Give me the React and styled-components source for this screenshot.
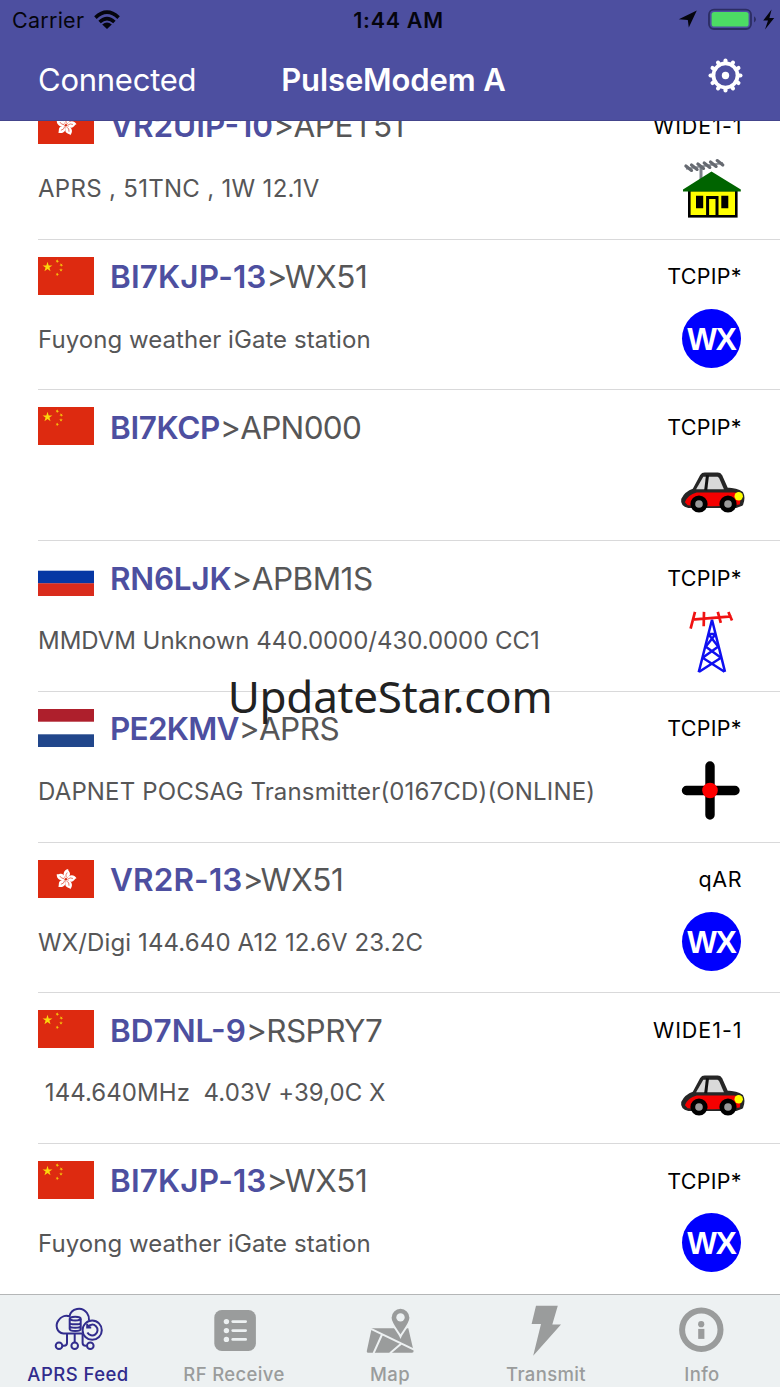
import React from 'react'
import styled, { createGlobalStyle } from 'styled-components'

const GlobalStyle = createGlobalStyle`
  * { box-sizing: border-box; }
  body {
    margin: 0;
    background: #fff;
    font-family: Inter, "Liberation Sans", sans-serif;
  }
`

const Screen = styled.div`
  position: relative;
  display: flex;
  flex-direction: column;
  width: 780px;
  height: 1387px;
  overflow: hidden;
  background: #fff;
`

// header
const Header = styled.header`
  height: 121px;
  flex: none;
  background: #4d4fa0;
  border-bottom: 1px solid #44458c;
`
const StatusBar = styled.div`
  height: 40px;
  padding: 0 3px 0 12px;
  display: grid;
  grid-template-columns: 1fr auto 1fr;
  align-items: center;
  font-size: 21.5px;
  line-height: 40px;
  color: #05050d;
`
const StatusSide = styled.div`
  display: flex;
  align-items: center;
  justify-content: ${(p) => (p.$end ? 'flex-end' : 'flex-start')};
  gap: 9px;
`
const Carrier = styled.span`
  letter-spacing: 0.25px;
`
const Clock = styled.span`
  font-weight: 600;
  letter-spacing: 0.7px;
  margin-left: 8px;
`
const StatusIcons = styled.svg`
  display: block;
  width: 99px;
  height: 24px;
`
const NavBar = styled.div`
  height: 80px;
  padding: 0 37px 0 38px;
  display: grid;
  grid-template-columns: 1fr auto 1fr;
  align-items: center;
  color: #fff;
  font-size: 31px;
  line-height: 78px;
`
const NavLink = styled.span`
  letter-spacing: -0.25px;
`
const NavTitle = styled.span`
  font-weight: 600;
  letter-spacing: -0.1px;
  margin-left: 6px;
`
const GearIcon = styled.svg`
  display: block;
  width: 35px;
  height: 35px;
  justify-self: end;
  margin-top: -9px;
`

// packets
const List = styled.main`
  flex: 1;
  min-height: 0;
  overflow: hidden;
`
const Rows = styled.div`
  margin-top: -32.1px;
  padding-left: 38px;
`
const Row = styled.div`
  height: 150.72px;
  padding-right: 36px;
  border-bottom: 1px solid #d9d9da;
  display: flex;
  justify-content: space-between;
`
const RowMain = styled.div`
  display: flex;
  flex-direction: column;
`
const RowHead = styled.div`
  height: 38px;
  margin-top: 17px;
  display: flex;
  align-items: center;
  gap: 16px;
`
const FlagBox = styled.svg`
  display: block;
  width: 56px;
  height: 38px;
`
const Route = styled.div`
  padding-top: 3px;
  font-size: 31.5px;
  line-height: 40px;
  letter-spacing: ${(p) => p.$track || 0}px;
  white-space: nowrap;
  color: #565657;
`
const Call = styled.span`
  font-weight: 600;
  color: #4d4fa0;
  letter-spacing: ${(p) => p.$track || 0}px;
`
const Comment = styled.div`
  margin-top: 29px;
  font-size: 24px;
  line-height: 32px;
  letter-spacing: ${(p) => p.$track || 0}px;
  white-space: pre;
  color: #565657;
`
const RowSide = styled.div`
  display: flex;
  flex-direction: column;
  align-items: flex-end;
`
const Path = styled.div`
  margin: 22.6px ${(p) => 2.5 - p.$track}px 0 0;
  height: 28px;
  font-size: 21.5px;
  line-height: 28px;
  letter-spacing: ${(p) => p.$track || 0}px;
  color: #000;
`
const SymbolBox = styled.div`
  width: 66px;
  height: 66px;
  margin-top: 15px;
  display: flex;
  align-items: center;
  justify-content: center;
`
const Drawing = styled.svg`
  display: block;
  width: 66px;
  height: 66px;
  overflow: visible;
`
const WxBadge = styled.div`
  width: 59px;
  height: 59px;
  border-radius: 50%;
  background: #0000fe;
  color: #fff;
  font: bold 31.5px/60px "Liberation Sans", Arial, sans-serif;
  letter-spacing: -1px;
  padding-left: 1px;
  text-align: center;
`

const Watermark = styled.div`
  position: absolute;
  top: 666px;
  left: 0;
  width: 780px;
  text-align: center;
  font: 44px/60px "Noto Sans", "Open Sans", sans-serif;
  letter-spacing: -0.25px;
  color: #222;
`

// tabs
const TabBar = styled.nav`
  flex: none;
  height: 93px;
  display: flex;
  background: #edf1f2;
  border-top: 1px solid #b4b6b7;
`
const Tab = styled.div`
  flex: 1;
  padding-top: 9px;
  display: flex;
  flex-direction: column;
  align-items: center;
  color: ${(p) => (p.$active ? '#312c8d' : '#9a9c9c')};
`
const TabIcon = styled.svg`
  display: block;
  width: 52px;
  height: 52px;
`
const TabLabel = styled.span`
  margin-top: 6px;
  font-size: 18.5px;
  font-weight: 500;
  line-height: 24px;
  letter-spacing: ${(p) => p.$track || 0}px;
`

const STAR = 'M0-1L.2245-.309.951-.309.363.118.588.809 0 .382-.588.809-.363.118-.951-.309-.2245-.309Z'

const flags = {
  cn: (
    <>
      <rect width="56" height="38" fill="#dd2a10" />
      <path d={STAR} fill="#fbd80c" transform="translate(9.5 10) scale(5.2)" />
      <path d={STAR} fill="#f5c40c" transform="translate(19.3 4.2) rotate(20) scale(2)" />
      <path d={STAR} fill="#f5c40c" transform="translate(23.2 8) rotate(40) scale(2)" />
      <path d={STAR} fill="#f5c40c" transform="translate(23 13) scale(2)" />
      <path d={STAR} fill="#f5c40c" transform="translate(19.3 17.4) rotate(20) scale(2)" />
    </>
  ),
  hk: (
    <>
      <rect width="56" height="38" fill="#dd2a10" />
      <g transform="translate(28 19.4)">
        {[8, 80, 152, 224, 296].map((a) => (
          <g key={a} transform={`rotate(${a})`}>
            <path d="M0-.8C-4.2-3-4.4-8.8.8-10.6C.2-9 3.8-7.8 3.2-4.8C2.8-2.6.8-2.4 0-.8Z" fill="#fff" />
            <path d="M0-2Q-1.6-4.4.3-7" fill="none" stroke="#dd2a10" strokeWidth=".6" />
          </g>
        ))}
      </g>
    </>
  ),
  ru: (
    <>
      <rect width="56" height="13" fill="#fff" />
      <rect y="12.7" width="56" height="12.8" fill="#0637a4" />
      <rect y="25.3" width="56" height="12.7" fill="#d92b1c" />
    </>
  ),
  nl: (
    <>
      <rect width="56" height="38" fill="#fff" />
      <rect width="56" height="12.7" fill="#ae1f2c" />
      <rect y="25.3" width="56" height="12.7" fill="#21468b" />
    </>
  ),
}

const House = () => (
  <Drawing viewBox="-1 0 66 66">
    <path d="M22 11V25" stroke="#7b8088" strokeWidth="3" />
    <path d="M7 13.8L44 8" stroke="#8d9299" strokeWidth="1.8" />
    {[[9.7, 13.2], [15.3, 12.2], [21.7, 11.2], [28, 10.2], [34.3, 9.2], [41, 7.8]].map(([x, y]) => (
      <path key={x} d={`M${x - 2.8} ${y - 2.2}l5.6 4.4`} stroke="#666a71" strokeWidth="3.2" strokeLinecap="round" />
    ))}
    <rect x="10.3" y="35" width="47" height="26.3" fill="#ff0" stroke="#000" strokeWidth="2.6" />
    <path d="M32.5 16.5L61.8 34.6V36.4H4V34.6Z" fill="#006400" />
    <path d="M17 40.8h7.2v12.4H17zM42.3 40.8h7v12.4h-7z" fill="#000" />
    <path d="M28.6 60V42.4H38V61" fill="none" stroke="#000" strokeWidth="3" />
  </Drawing>
)

const Car = () => (
  <Drawing viewBox="-0.7 -0.3 66 66">
    <path
      d="M4 43Q7 36.5 15.2 33.6L22.8 19.4Q23.8 17.8 26 17.8H39Q41 17.8 42 19.4L48 32.8Q58 33.2 63 36.6Q65.5 41 63 48L57 50.3H10Q3 48.5 4 43Z"
      fill="#262626" stroke="#262626" strokeWidth="3" strokeLinejoin="round"
    />
    <path d="M6.2 46Q9 38.4 18 36.2H55Q61 36.5 62.5 40L61 48.3Q40 51 9 49Z" fill="#f50000" />
    <path d="M17.4 33L24.6 20.4H38.8Q40 20.8 40.6 22.2L45.2 33Z" fill="#d9d9d9" />
    <path d="M28.8 19L27 34" stroke="#111" strokeWidth="3" />
    {[20.3, 49.3].map((x) => (
      <g key={x}>
        <circle cx={x} cy="47.7" r="8.6" fill="#000" />
        <circle cx={x} cy="47.7" r="3.8" fill="#999" />
      </g>
    ))}
    <circle cx="60" cy="40" r="4.2" fill="#ff0" />
  </Drawing>
)

const Tower = () => (
  <Drawing viewBox="-1 0.3 66 66" fill="none">
    <g stroke="#0f0ff0" strokeWidth="2.5">
      <path d="M19.7 65.5L33 13L46 65.2" />
      <path d="M29.3 27.3H36.7M29.3 27.3L39 39.5M36.7 27.3L27 39.5M26.5 39.7L42 51M39.4 39.7L23.6 51M23.6 51L45.5 65M42 51L20.2 65" />
    </g>
    <path
      d="M13 13L52.5 9.7M16 5.2L11.6 22M25 5.2L24.7 19.5M38.8 5.2L41.8 16.2M49.4 5.2L53 13.8"
      stroke="#f01212" strokeWidth="2.7"
    />
  </Drawing>
)

const Digi = () => (
  <Drawing viewBox="-2 -0.5 66 66">
    <path d="M30 8.5V57.5M6.5 33H55" stroke="#000" strokeWidth="9.4" strokeLinecap="round" />
    <circle cx="30" cy="33" r="7.8" fill="#f00" />
  </Drawing>
)

const symbols = {
  house: <House />,
  car: <Car />,
  tower: <Tower />,
  digi: <Digi />,
  wx: <WxBadge>WX</WxBadge>,
}

// letter spacing of the path labels
const pathTrack = { 'WIDE1-1': 0.95, 'TCPIP*': 0.25, qAR: 0.6 }

// track: letter spacing of [call, destination, comment]
const packets = [
  { flag: 'hk', call: 'VR2UIP-10', to: 'APET51', path: 'WIDE1-1', symbol: 'house', text: 'APRS , 51TNC , 1W 12.1V', track: [0, -0.45, 0.3] },
  { flag: 'cn', call: 'BI7KJP-13', to: 'WX51', path: 'TCPIP*', symbol: 'wx', text: 'Fuyong weather iGate station', track: [0.12, -0.45, 0.05] },
  { flag: 'cn', call: 'BI7KCP', to: 'APN000', path: 'TCPIP*', symbol: 'car', text: '', track: [-0.35, -0.7, 0] },
  { flag: 'ru', call: 'RN6LJK', to: 'APBM1S', path: 'TCPIP*', symbol: 'tower', text: 'MMDVM Unknown 440.0000/430.0000 CC1', track: [-0.25, -0.5, -0.04] },
  { flag: 'nl', call: 'PE2KMV', to: 'APRS', path: 'TCPIP*', symbol: 'digi', text: 'DAPNET POCSAG Transmitter(0167CD)(ONLINE)', track: [-0.75, -0.55, 0.16] },
  { flag: 'hk', call: 'VR2R-13', to: 'WX51', path: 'qAR', symbol: 'wx', text: 'WX/Digi 144.640 A12 12.6V 23.2C', track: [0.12, -0.45, 0.12] },
  { flag: 'cn', call: 'BD7NL-9', to: 'RSPRY7', path: 'WIDE1-1', symbol: 'car', text: ' 144.640MHz  4.03V +39,0C X', track: [0, -0.55, 0.06] },
  { flag: 'cn', call: 'BI7KJP-13', to: 'WX51', path: 'TCPIP*', symbol: 'wx', text: 'Fuyong weather iGate station', track: [0.12, -0.45, 0.05] },
]

const tabs = [
  {
    label: 'APRS Feed',
    active: true,
    icon: (
      <g fill="none" stroke="currentColor" strokeWidth="2">
        <path d="M30 29.4H11.5C4.5 28.6 3 21 6.5 16.4C9 12.6 13.5 11 17.5 12.3C19 4 30 2 35 9C37 11.8 37.3 14 37 16.4" />
        <path d="M17.7 15V25C17.7 27.6 28.7 27.6 28.7 25V15M17.7 18.4C17.7 21 28.7 21 28.7 18.4M17.7 21.8C17.7 24.4 28.7 24.4 28.7 21.8" />
        <ellipse cx="23.2" cy="14.6" rx="5.5" ry="1.9" />
        <circle cx="40.2" cy="26.2" r="9.6" />
        <path d="M35.8 22.8A5.4 5.4 0 1 1 35.4 28.6M35.2 19.8V23.6H39.2" />
        <path d="M15 29.6V39Q15 41.7 12 41.7H10.7M22.7 29.6V38M30.6 29.6V39Q30.6 41.7 33.6 41.7H34.7" />
        <circle cx="7" cy="41.7" r="3.3" />
        <circle cx="22.7" cy="41.7" r="3.3" />
        <circle cx="38.3" cy="41.7" r="3.3" />
      </g>
    ),
  },
  {
    label: 'RF Receive',
    icon: (
      <>
        <rect x="6.3" y="6" width="41.6" height="41" rx="7.5" fill="currentColor" />
        {[17.6, 26.6, 35.4].map((y) => (
          <g key={y} fill="#edf1f2">
            <circle cx="18.4" cy={y} r="2.7" />
            <rect x="23.4" y={y - 1.3} width="15.6" height="2.6" rx="1.3" />
          </g>
        ))}
      </>
    ),
  },
  {
    label: 'Map',
    icon: (
      <>
        <path d="M7.7 24.3H44.3L49.6 47Q49.8 48.8 48 48.8H4Q2.4 48.8 2.8 47Z" fill="currentColor" />
        <path d="M7 24.8L50 45.6M18 30.5L9.6 49.2M26 49.2L37.4 39.4" stroke="#edf1f2" strokeWidth="2" />
        <path
          d="M36.5 32.5C34.5 28 26.6 19.6 26.6 13.7A9.9 9.9 0 0 1 46.4 13.7C46.4 19.6 38.5 28 36.5 32.5Z"
          fill="currentColor" stroke="#edf1f2" strokeWidth="2"
        />
        <circle cx="36.5" cy="13.4" r="4.2" fill="#edf1f2" />
      </>
    ),
  },
  {
    label: 'Transmit',
    icon: <path d="M16 1.7H37.8L32.3 20.5H41L13.2 51.8L21 20H11.6Z" fill="currentColor" />,
  },
  {
    label: 'Info',
    icon: (
      <g fill="currentColor">
        <circle cx="25.3" cy="25.8" r="19.2" fill="none" stroke="currentColor" strokeWidth="6" />
        <circle cx="25.2" cy="20.2" r="3.1" />
        <path d="M22.2 24.9h6.2v10h-6.2z" />
      </g>
    ),
  },
]

const Wifi = () => (
  <svg width="28" height="20" viewBox="0 0 28 20" fill="none" stroke="#05050d" strokeWidth="3.6">
    <path d="M2.4 7.6Q14-3.2 25.6 7.6M6.6 12Q14 5.2 21.4 12" />
    <path d="M14 19L9.2 14.6Q14 10.6 18.8 14.6Z" fill="#05050d" stroke="none" />
  </svg>
)

const Gear = () => (
  <GearIcon viewBox="-18 -18 36 36" fill="none" stroke="#fff">
    <circle r="12.4" strokeWidth="3.9" />
    {Array.from({ length: 12 }, (_, i) => (
      <path key={i} d="M0-13V-15.4" strokeWidth="4.2" strokeLinecap="round" transform={`rotate(${i * 30})`} />
    ))}
    <circle r="3.8" fill="#fff" stroke="none" />
  </GearIcon>
)

export default function App() {
  return (
    <>
      <GlobalStyle />
      <Screen>
        <Header>
          <StatusBar>
            <StatusSide>
              <Carrier>Carrier</Carrier>
              <Wifi />
            </StatusSide>
            <Clock>1:44 AM</Clock>
            <StatusSide $end>
              <StatusIcons viewBox="0 0 99 24">
                <path d="M18.8 2.4L10.8 19.6L9.8 12L.8 11.2Z" fill="#05050d" />
                <rect x="31" y="1.6" width="42" height="19.4" rx="5" fill="none" stroke="#2c2d63" strokeWidth="1.8" />
                <rect x="33.6" y="4" width="37" height="14.6" rx="2.6" fill="#4cdc64" />
                <path d="M76 8.2Q80 11.3 76 14.6Z" fill="#2c2d63" />
                <path d="M93.6 1.6L85.2 12.6H90L87 21.6L96.2 10H91.4Z" fill="#05050d" />
              </StatusIcons>
            </StatusSide>
          </StatusBar>
          <NavBar>
            <NavLink>Connected</NavLink>
            <NavTitle>PulseModem A</NavTitle>
            <Gear />
          </NavBar>
        </Header>

        <List>
          <Rows>
            {packets.map((item, i) => (
              <Row key={i}>
                <RowMain>
                  <RowHead>
                    <FlagBox viewBox="0 0 56 38">{flags[item.flag]}</FlagBox>
                    <Route $track={item.track[1]}>
                      <Call $track={item.track[0]}>{item.call}</Call>&gt;{item.to}
                    </Route>
                  </RowHead>
                  <Comment $track={item.track[2]}>{item.text}</Comment>
                </RowMain>
                <RowSide>
                  <Path $track={pathTrack[item.path]}>{item.path}</Path>
                  <SymbolBox>{symbols[item.symbol]}</SymbolBox>
                </RowSide>
              </Row>
            ))}
          </Rows>
        </List>

        <TabBar>
          {tabs.map((tab) => (
            <Tab key={tab.label} $active={tab.active}>
              <TabIcon viewBox="0 0 52 52">{tab.icon}</TabIcon>
              <TabLabel $track={tab.active ? 0.45 : 0.35}>{tab.label}</TabLabel>
            </Tab>
          ))}
        </TabBar>
        <Watermark>UpdateStar.com</Watermark>
      </Screen>
    </>
  )
}
